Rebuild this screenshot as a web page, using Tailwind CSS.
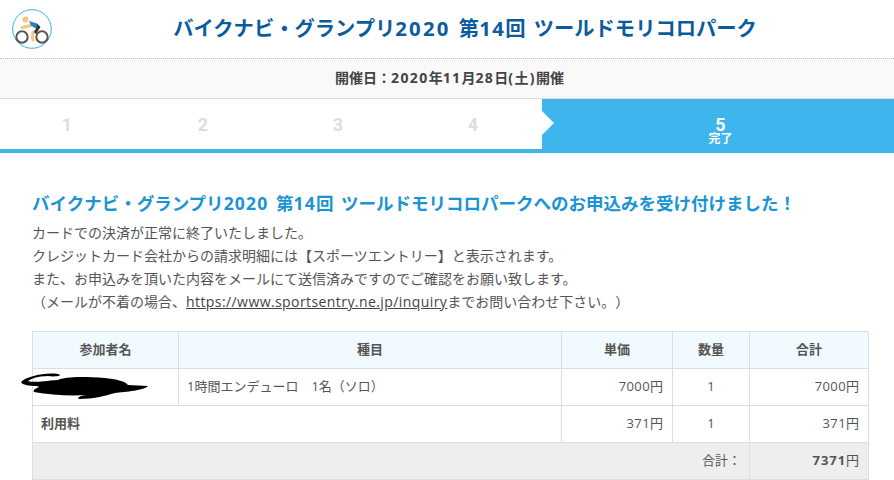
<!DOCTYPE html>
<html lang="ja">
<head>
<meta charset="utf-8">
<script src="https://cdn.jsdelivr.net/npm/@tailwindcss/browser@4"></script>
</head>
<body class="w-[894px] h-[480px] overflow-hidden bg-white font-['Open_Sans','Noto_Sans_CJK_JP',sans-serif] text-[#555] [text-spacing-trim:space-all]">
<header class="h-[59px] border-b border-dotted border-[#bbb] flex items-center relative">
  <svg class="absolute left-[12px] top-[9px]" width="40" height="40" viewBox="0 0 40 40">
    <circle cx="20" cy="20" r="19.3" fill="#fff" stroke="#3db4ea" stroke-width="1"/>
    <circle cx="10" cy="28" r="5.7" fill="none" stroke="#555" stroke-width="2"/>
    <circle cx="30" cy="28" r="5.7" fill="none" stroke="#555" stroke-width="2"/>
    <circle cx="13.5" cy="10.5" r="3" fill="#f5c67f"/>
    <path d="M10 18.5 L19 16.5" stroke="#f5c67f" stroke-width="3" fill="none" stroke-linecap="round"/>
    <path d="M17 12 L25 14.5 L24.5 20 L19 16.5 Z" fill="#1a86c8"/>
    <path d="M25 14.5 L28.5 18 L24 25 L21 23 L24 20 Z" fill="#333"/>
    <path d="M21 23 L20.5 29 L21 31" stroke="#f5c67f" stroke-width="3" fill="none" stroke-linecap="round"/>
  </svg>
  <h1 class="w-full text-center pl-[36px] pb-[2px] text-[20.3px] font-bold text-[#0a5c9e] leading-none [word-spacing:3px]">バイクナビ・グランプリ<span class="tracking-[0.11em]">2020</span> 第<span class="tracking-[0.07em]">14</span>回 ツールドモリコロパーク</h1>
</header>
<div class="h-[40px] pb-[2px] pl-[5px] bg-[#f9f9f9] border-b border-[#ddd] flex items-center justify-center text-[14px] font-bold text-[#444]">開催日：<span class="tracking-[0.1em]">2020</span>年<span class="tracking-[0.1em]">11</span>月<span class="tracking-[0.1em]">28</span>日<span class="tracking-[0.1em]">(土)</span>開催</div>
<nav class="h-[54px] border-b-4 border-[#3eb5ec] flex font-['Roboto','Noto_Sans_CJK_JP',sans-serif]">
  <div class="w-[134px] flex items-center justify-center text-[18px] font-bold text-[#ddd]">1</div>
  <div class="w-[138px] flex items-center justify-center text-[18px] font-bold text-[#ddd]">2</div>
  <div class="w-[132px] flex items-center justify-center text-[18px] font-bold text-[#ddd]">3</div>
  <div class="w-[138px] flex items-center justify-center text-[18px] font-bold text-[#ddd]">4</div>
  <div class="relative flex-1 bg-[#3eb5ec] text-white font-bold flex flex-col items-center justify-center pl-[5px] pt-[12px]">
    <span class="absolute left-0 top-[12px] border-y-[12px] border-y-transparent border-l-[12px] border-l-white"></span>
    <span class="text-[18px] leading-[17px]">5</span>
    <span class="text-[12px] leading-[12px]">完了</span>
  </div>
</nav>
<main class="px-[32px] pt-[38px]">
  <h2 class="text-[17.5px] leading-[24px] font-bold text-[#1a94d6] h-[24px] whitespace-nowrap [word-spacing:3px]">バイクナビ・グランプリ<span class="tracking-[0.07em]">2020</span> 第<span class="tracking-[0.07em]">14</span>回 ツールドモリコロパークへのお申込みを受け付けました！</h2>
  <div class="text-[14px] leading-[23px] mt-[6px] text-[#555]">
    <p>カードでの決済が正常に終了いたしました。</p>
    <p>クレジットカード会社からの請求明細には【スポーツエントリー】と表示されます。</p>
    <p>また、お申込みを頂いた内容をメールにて送信済みですのでご確認をお願い致します。</p>
    <p>（メールが不着の場合、<a class="underline text-[#444] tracking-[0.03em]">https://www.sportsentry.ne.jp/inquiry</a>までお問い合わせ下さい。）</p>
  </div>
  <table class="mt-[18px] w-[836px] table-fixed border-collapse text-[13px] text-[#555]">
    <colgroup><col class="w-[146px]"><col class="w-[383px]"><col class="w-[111px]"><col class="w-[77px]"><col class="w-[119px]"></colgroup>
    <tbody>
      <tr class="h-[37px] bg-[#f1faff] font-bold">
        <th class="border border-[#ddd]">参加者名</th>
        <th class="border border-[#ddd]">種目</th>
        <th class="border border-[#ddd]">単価</th>
        <th class="border border-[#ddd]">数量</th>
        <th class="border border-[#ddd]">合計</th>
      </tr>
      <tr class="h-[37px]">
        <td class="border border-[#ddd] relative">
          <svg class="absolute left-[-13px] top-[3px]" width="135" height="30" viewBox="0 0 135 30">
            <path d="M1 10 C5 5 25 0 38 2 C44 4 34 5 28 4 C18 4 10 7 8 9 C14 11 22 9 38 8 C44 5 60 4 85 6 C95 7 105 9 108 13 L128 14 C125 18 105 20 95 21 C85 24 72 27 60 27 C56 27 58 24 66 23 C50 24 30 23 14 20 C12 16 24 15 16 14 C10 14 2 13 1 10 Z" fill="#000"/>
          </svg>
        </td>
        <td class="border border-[#ddd] px-[8px]">1時間エンデューロ　1名（ソロ）</td>
        <td class="border border-[#ddd] px-[9px] text-right"><span class="tracking-[0.03em]">7000</span>円</td>
        <td class="border border-[#ddd] text-center">1</td>
        <td class="border border-[#ddd] px-[9px] text-right"><span class="tracking-[0.03em]">7000</span>円</td>
      </tr>
      <tr class="h-[37px]">
        <td colspan="2" class="border border-[#ddd] px-[8px] font-bold">利用料</td>
        <td class="border border-[#ddd] px-[9px] text-right"><span class="tracking-[0.03em]">371</span>円</td>
        <td class="border border-[#ddd] text-center">1</td>
        <td class="border border-[#ddd] px-[9px] text-right"><span class="tracking-[0.03em]">371</span>円</td>
      </tr>
      <tr class="h-[37px] bg-[#eee]">
        <td colspan="4" class="border border-[#ddd] pr-[8px] text-right">合計：</td>
        <td class="border border-[#ddd] px-[9px] text-right"><b class="tracking-[0.07em]">7371</b>円</td>
      </tr>
    </tbody>
  </table>
</main>
</body>
</html>
